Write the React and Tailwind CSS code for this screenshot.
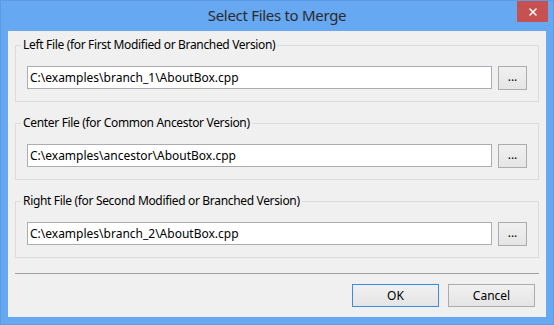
import { X } from 'lucide-react';

const groups = [
  { label: 'Left File (for First Modified or Branched Version)', path: 'C:\\examples\\branch_1\\AboutBox.cpp' },
  { label: 'Center File (for Common Ancestor Version)', path: 'C:\\examples\\ancestor\\AboutBox.cpp' },
  { label: 'Right File (for Second Modified or Branched Version)', path: 'C:\\examples\\branch_2\\AboutBox.cpp' },
];

function FileGroup({ label, path }) {
  return (
    <fieldset className="border border-[#dcdcdc] px-[11px] pb-[11px] m-0">
      <legend className="ml-[-6px] px-[2px] text-[12px] leading-[16px] tracking-[-0.33px] text-black">{label}</legend>
      <div className="flex items-start gap-[6px] mt-[13px]">
        <div className="flex-1 h-[23px] bg-white border border-[#abadb3] flex items-center px-[2px] text-[12px] text-black">
          {path}
        </div>
        <button className="w-[29px] h-[24px] border border-[#acacac] bg-gradient-to-b from-[#f0f0f0] to-[#e5e5e5] flex items-center justify-center text-[12px] leading-none text-black pb-[2px]">
          ...
        </button>
      </div>
    </fieldset>
  );
}

export default function App() {
  return (
    <div className="w-[554px] h-[325px] bg-[#67a8f2] border border-[#5b9be4] flex flex-col font-['Noto_Sans',sans-serif]">
      <div className="relative h-[30px] flex items-center justify-center">
        <span className="text-[15px] tracking-[-0.3px] text-[#2b2b2b] pb-[1px]">Select Files to Merge</span>
        <div className="absolute top-0 right-[5px] w-[31px] h-[21px] bg-[#c75050] flex items-center justify-center">
          <X size={12} strokeWidth={3} className="text-white" />
        </div>
      </div>
      <div className="mx-[7px] h-[286px] bg-[#f0f0f0] flex flex-col px-[7px] pt-[6px]">
        <div className="flex flex-col gap-[13px]">
          {groups.map((g) => (
            <FileGroup key={g.label} label={g.label} path={g.path} />
          ))}
        </div>
        <div className="mt-[15px] h-px bg-[#a0a0a0]" />
        <div className="flex justify-end gap-[9px] mt-[10px] pr-[4px]">
          <button className="w-[87px] h-[23px] border border-[#3c8ce6] bg-gradient-to-b from-[#f0f0f0] to-[#e5e5e5] text-[12px] text-black">
            OK
          </button>
          <button className="w-[87px] h-[23px] border border-[#acacac] bg-gradient-to-b from-[#f0f0f0] to-[#e5e5e5] text-[12px] text-black">
            Cancel
          </button>
        </div>
      </div>
    </div>
  );
}
